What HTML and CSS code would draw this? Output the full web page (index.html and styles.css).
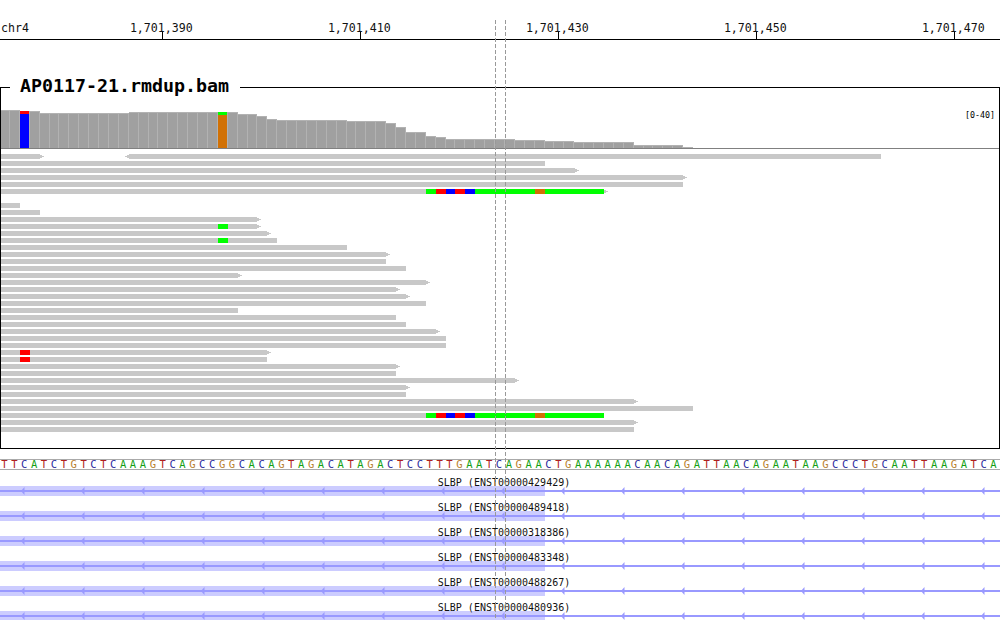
FILE: index.html
```html
<!DOCTYPE html>
<html lang="en">
<head>
    <meta charset="UTF-8">
    <meta name="viewport" content="width=device-width, initial-scale=1.0">
    <title>AP0117-21.rmdup.bam - chr4</title>
    <link rel="stylesheet" href="styles.css">
</head>
<body>

    <div id="browser">
        <svg id="ruler" width="1000" height="40" viewBox="0 0 1000 40"></svg>

        <div id="track">
            <h2 class="track-title">AP0117-21.rmdup.bam</h2>
            <svg id="pileup" width="998" height="360" viewBox="1 88 998 360"></svg>
        </div>

        <div id="sequence"></div>

        <svg id="genes" width="1000" height="150" viewBox="0 470 1000 150"></svg>

        <div class="cursor cursor-left"></div>
        <div class="cursor cursor-right"></div>
    </div>

    <script>
        var SVG_NS = 'http://www.w3.org/2000/svg';
        var BP = 9.9; // pixels per base

        function px(base) {
            return Math.round(base * BP);
        }

        function rect(parent, cls, x, y, w, h) {
            var el = document.createElementNS(SVG_NS, 'rect');
            el.setAttribute('class', cls);
            el.setAttribute('x', x);
            el.setAttribute('y', y);
            el.setAttribute('width', w);
            el.setAttribute('height', h);
            parent.appendChild(el);
        }

        function label(parent, cls, x, y, str) {
            var el = document.createElementNS(SVG_NS, 'text');
            el.setAttribute('class', cls);
            el.setAttribute('x', x);
            el.setAttribute('y', y);
            el.textContent = str;
            parent.appendChild(el);
        }

        // Ruler
        var ruler = document.getElementById('ruler');
        label(ruler, 'ruler-text', 1, 32, 'chr4');
        rect(ruler, 'black', 0, 39, 1000, 1);
        ['1,701,390', '1,701,410', '1,701,430', '1,701,450', '1,701,470'].forEach(function (pos, i) {
            var x = 162 + i * 198;
            rect(ruler, 'black', x, 32, 1, 7);
            label(ruler, 'ruler-text middle', x - 0.7, 32, pos);
        });

        // Coverage: top y of each base column, as [count, top]
        var pileup = document.getElementById('pileup');
        var runs = [[2, 110], [2, 111], [9, 113], [11, 112], [2, 114], [1, 116], [1, 119], [7, 120], [4, 121],
            [1, 123], [1, 127], [2, 132], [1, 136], [1, 137], [7, 139], [3, 140], [3, 141], [6, 142], [5, 145], [1, 147]];
        var column = 0;
        runs.forEach(function (run) {
            for (var n = 0; n < run[0]; n++) {
                var x = px(column);
                var w = px(column + 1) - x;
                var top = run[1];
                rect(pileup, 'cov-edge', x, top, w, 148 - top);
                if (column === 2) {
                    rect(pileup, 'base-t', x, top, w - 1, 3);
                    rect(pileup, 'base-a', x, top + 3, w - 1, 148 - top - 3);
                } else if (column === 22) {
                    rect(pileup, 'base-c', x, top, w - 1, 3);
                    rect(pileup, 'base-g', x, top + 3, w - 1, 148 - top - 3);
                } else {
                    rect(pileup, 'cov-bar', x, top + 1, w - 1, 148 - top - 1);
                }
                column++;
            }
        });
        rect(pileup, 'axis', 0, 148, 1000, 1);
        label(pileup, 'range-text', 965, 118, '[0-40]');

        // Reads, one row every 7px from y=154. Rows: [end x, has arrow, mismatches]
        var mixed = [[426, 436, 'c'], [436, 446, 't'], [446, 455, 'a'], [455, 465, 't'], [465, 475, 'a'],
            [475, 535, 'c'], [535, 545, 'g'], [545, 604, 'c']];
        var snpC = [[218, 228, 'c']];
        var snpT = [[20, 30, 't']];
        var rows = [
            [40, true], [545], [575, true], [683, true], [683], [604, true, mixed], null,
            [20], [40], [257, true], [257, true, snpC], [267, true], [277, false, snpC],
            [347], [386, true], [386], [406], [238, true], [426, true], [396, true], [406, true],
            [426], [238], [396], [406], [436, true], [446], [446],
            [267, true, snpT], [267, false, snpT], [396, true], [396], [515, true], [406, true], [406],
            [634, true], [693], [604, false, mixed], [634, true], [634]
        ];

        function arrowRight(x, y) {
            rect(pileup, 'read', x, y + 1, 2, 3);
            rect(pileup, 'read', x + 2, y + 2, 2, 1);
        }

        rows.forEach(function (row, i) {
            if (!row) return;
            var y = 154 + i * 7;
            rect(pileup, 'read', 0, y, row[0], 5);
            if (row[1]) arrowRight(row[0], y);
            (row[2] || []).forEach(function (m) {
                rect(pileup, 'base-' + m[2], m[0], y, m[1] - m[0], 5);
            });
        });

        // Second read on the first row points the other way
        rect(pileup, 'read', 129, 154, 752, 5);
        rect(pileup, 'read', 127, 155, 2, 3);
        rect(pileup, 'read', 125, 156, 2, 1);

        // Reference sequence
        var bases = 'TTCATCTGTCTCAAAGTCAGCCGGCACAGTAGAC' + 'ATAGACTCCTTTGAATCAGAACTGAAAAAACAA' + 'CAGATTAACAGAATAAGCCCTGCAATTAAGATCA';
        var sequence = document.getElementById('sequence');
        bases.split('').forEach(function (b) {
            var span = document.createElement('span');
            span.className = 'letter letter-' + b.toLowerCase();
            span.textContent = b;
            sequence.appendChild(span);
        });

        // Gene transcripts
        var genes = document.getElementById('genes');
        var transcripts = ['ENST00000429429', 'ENST00000489418', 'ENST00000318386',
            'ENST00000483348', 'ENST00000488267', 'ENST00000480936'];
        transcripts.forEach(function (id, i) {
            var top = 486 + i * 25;
            rect(genes, 'exon', 0, top, 545, 10);
            rect(genes, 'intron', 0, top + 4, 1000, 2);
            for (var x = 21; x < 1000; x += 60) {
                var tip = document.createElementNS(SVG_NS, 'polygon');
                tip.setAttribute('class', 'intron');
                tip.setAttribute('points', x + ',' + (top + 5) + ' ' + (x + 3.5) + ',' + (top + 1) + ' ' + (x + 3.5) + ',' + (top + 9));
                genes.appendChild(tip);
            }
            label(genes, 'gene-text middle', 504, top, 'SLBP (' + id + ')');
        });
    </script>

</body>
</html>
```

FILE: styles.css
```css
body {
    margin: 0;
    background-color: #fff;
    font-family: "DejaVu Sans Mono", monospace;
    overflow: hidden;
}
svg {
    display: block;
}
rect {
    shape-rendering: crispEdges;
}
#browser {
    position: relative;
    width: 1000px;
    height: 640px;
}
.black {
    fill: #000;
}
.ruler-text {
    font-family: "DejaVu Sans Mono", monospace;
    font-size: 11.6px;
    fill: #111;
}
.middle {
    text-anchor: middle;
}
#track {
    position: relative;
    margin-top: 47px;
    height: 360px;
    border: 1px solid #000;
}
.track-title {
    position: absolute;
    top: -13px;
    left: 9px;
    margin: 0;
    padding: 0 11px 0 10px;
    background-color: #fff;
    font-size: 18.3px;
    line-height: 22px;
    font-weight: bold;
    color: #000;
}
.cov-edge {
    fill: #b2b2b2;
}
.cov-bar {
    fill: #a0a0a0;
}
.axis {
    fill: #808080;
}
.range-text {
    font-family: "DejaVu Sans Mono", monospace;
    font-size: 8.3px;
    fill: #000;
}
.read {
    fill: #c8c8c8;
}
.base-a {
    fill: #0000ff;
}
.base-c {
    fill: #00ff00;
}
.base-g {
    fill: #d17105;
}
.base-t {
    fill: #ff0000;
}
#sequence {
    display: grid;
    grid-template-columns: repeat(101, 9.9px);
    margin-top: 10px;
    height: 9px;
    border-top: 1px solid #aaa;
    border-bottom: 1px solid #aaa;
    overflow: hidden;
}
.letter {
    margin-left: -1px;
    font-size: 10.5px;
    line-height: 9px;
    text-align: center;
}
.letter-a {
    color: #14a014;
}
.letter-c {
    color: #2a2a9c;
}
.letter-g {
    color: #b8802e;
}
.letter-t {
    color: #b02020;
}
.exon {
    fill: #ccccff;
}
.intron {
    fill: #9999ff;
}
.gene-text {
    font-family: "DejaVu Sans Mono", monospace;
    font-size: 10px;
    fill: #111;
}
.cursor {
    position: absolute;
    top: 20px;
    width: 1px;
    height: 598px;
    background-image: repeating-linear-gradient(to bottom, #999 0, #999 4px, transparent 4px, transparent 6px);
}
.cursor-left {
    left: 495px;
}
.cursor-right {
    left: 505px;
}
```
